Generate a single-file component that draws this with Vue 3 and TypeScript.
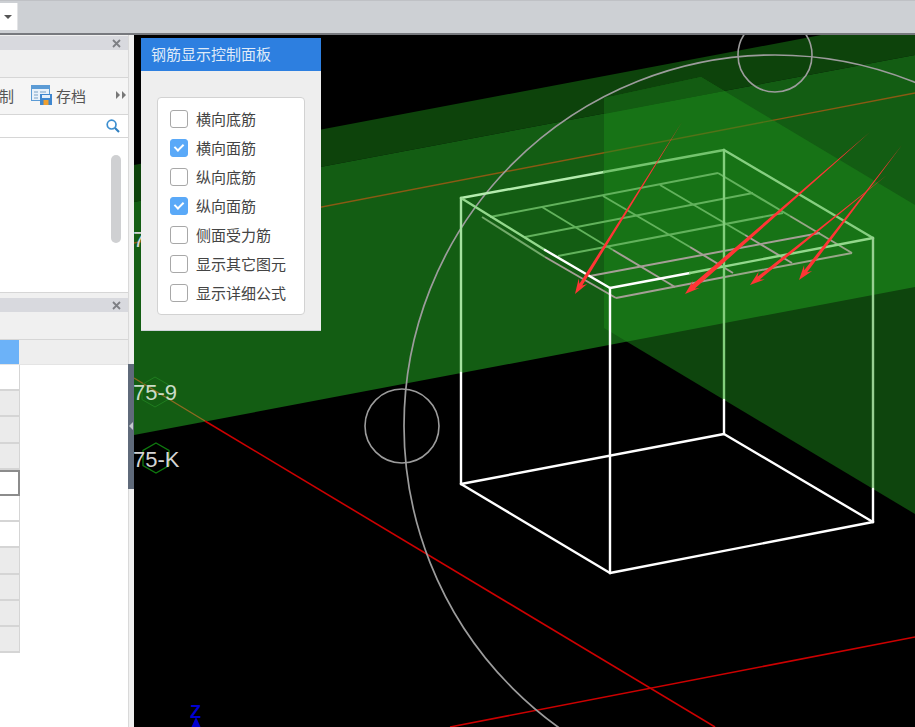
<script setup lang="ts">
import { ref } from 'vue'

type Pt = [number, number]

const options = ref([
  { label: '横向底筋', on: false },
  { label: '横向面筋', on: true },
  { label: '纵向底筋', on: false },
  { label: '纵向面筋', on: true },
  { label: '侧面受力筋', on: false },
  { label: '显示其它图元', on: false },
  { label: '显示详细公式', on: false },
])

// 表格行：white / grey / active
const rows = [
  'white', 'grey', 'grey', 'grey', 'active', 'white', 'white', 'grey', 'grey', 'grey', 'grey',
]

const PALE = '#93d88c'
const SOFT = '#74c46e'
const WHITE = '#ffffff'
const GRID = '#62b25c'
const GREY = '#a59f96'

// 立方体线框，被绿色平面遮住的部分颜色变淡
const boxEdges: { a: Pt; b: Pt; c: string }[] = [
  { a: [461, 198], b: [604, 172], c: '#b4ecae' },
  { a: [604, 172], b: [724, 150], c: SOFT },
  { a: [724, 150], b: [873, 238], c: '#86cf80' },
  { a: [461, 198], b: [545, 250], c: PALE },
  { a: [545, 250], b: [610, 288], c: WHITE },
  { a: [610, 288], b: [690, 273], c: WHITE },
  { a: [690, 273], b: [873, 238], c: PALE },
  { a: [461, 198], b: [461, 373], c: '#a6e2a0' },
  { a: [461, 373], b: [461, 484], c: WHITE },
  { a: [724, 150], b: [724, 400], c: '#83cf7d' },
  { a: [724, 400], b: [724, 434], c: WHITE },
  { a: [873, 238], b: [873, 489], c: '#98d092' },
  { a: [873, 489], b: [873, 522], c: WHITE },
  { a: [610, 288], b: [610, 573], c: WHITE },
  { a: [461, 484], b: [724, 434], c: WHITE },
  { a: [724, 434], b: [873, 522], c: WHITE },
  { a: [873, 522], b: [610, 573], c: WHITE },
  { a: [610, 573], b: [461, 484], c: WHITE },
]

const gridEdges: { a: Pt; b: Pt; c: string }[] = [
  { a: [490, 217], b: [718, 173], c: GRID },
  { a: [525, 237], b: [753, 193], c: GRID },
  { a: [558, 256], b: [783, 213], c: GRID },
  { a: [590, 276], b: [820, 233], c: GREY },
  { a: [616, 298], b: [730, 276], c: GREY },
  { a: [730, 276], b: [852, 253], c: '#98a688' },
  { a: [482, 217], b: [545, 257], c: '#72aa6a' },
  { a: [545, 257], b: [616, 298], c: GREY },
  { a: [542, 207], b: [613, 250], c: GRID },
  { a: [613, 250], b: [675, 287], c: GREY },
  { a: [603, 196], b: [690, 247], c: GRID },
  { a: [690, 247], b: [733, 273], c: GREY },
  { a: [660, 185], b: [745, 235], c: GRID },
  { a: [745, 235], b: [792, 263], c: GREY },
  { a: [718, 173], b: [790, 216], c: GRID },
  { a: [790, 216], b: [852, 253], c: '#98a688' },
]

function arrow(tail: Pt, tip: Pt, w: number): string {
  const dx = tip[0] - tail[0]
  const dy = tip[1] - tail[1]
  const len = Math.hypot(dx, dy)
  const ux = dx / len
  const uy = dy / len
  const at = (back: number, side: number) =>
    `${(tip[0] - ux * back - uy * side).toFixed(1)},${(tip[1] - uy * back + ux * side).toFixed(1)}`
  return [
    tail.join(','),
    at(11, w),
    at(15, 5),
    tip.join(','),
    at(15, -5),
    at(11, -w),
  ].join(' ')
}

const arrows = [
  arrow([682, 122], [575, 294], 1.7),
  arrow([870, 132], [685, 294], 2.4),
  arrow([887, 175], [750, 285], 1.8),
  arrow([902, 145], [799, 280], 1.8),
]

function hexagon(cx: number, cy: number, r: number): string {
  const pts: string[] = []
  for (let i = 0; i < 6; i++) {
    const t = (Math.PI / 3) * i - Math.PI / 2
    pts.push(`${(cx + r * Math.cos(t)).toFixed(1)},${(cy + r * Math.sin(t)).toFixed(1)}`)
  }
  return pts.join(' ')
}
</script>

<template>
  <div class="window">
    <header class="topbar">
      <div class="combo"><span class="caret"></span></div>
    </header>

    <div class="workspace">
      <aside class="side">
        <section class="panel first">
          <div class="panel-head">
            <svg class="close" width="9" height="9" viewBox="0 0 9 9">
              <path d="M1 1 8 8M8 1 1 8" />
            </svg>
          </div>
          <div class="strip"></div>
          <div class="tools">
            <span class="tool-cut">制</span>
            <svg class="save-icon" width="21" height="20" viewBox="0 0 21 20">
              <rect x="0.5" y="0.5" width="18" height="15" fill="#e8f1fa" stroke="#5b9bd5" />
              <rect x="0" y="0" width="19" height="4" fill="#5b9bd5" />
              <path d="M3 7h4M3 10h4M3 13h4M9 7h6" stroke="#9dbcd8" stroke-width="1.5" />
              <rect x="9" y="9" width="12" height="11" fill="#3f87cf" />
              <rect x="11" y="10" width="8" height="3" fill="#e6f0fa" />
              <rect x="12.5" y="15" width="5" height="5" fill="#f0a030" />
            </svg>
            <span class="tool-label">存档</span>
            <svg class="more" width="10" height="8" viewBox="0 0 10 8">
              <path d="M0 0 4 4 0 8ZM6 0 10 4 6 8Z" />
            </svg>
          </div>
          <div class="search">
            <svg width="14" height="14" viewBox="0 0 14 14">
              <circle cx="5.6" cy="5.6" r="4.4" fill="none" stroke="#3d8fd0" stroke-width="1.7" />
              <path d="M9 9 13 13" stroke="#2f7fc0" stroke-width="2.2" />
            </svg>
          </div>
          <div class="list"><div class="thumb"></div></div>
        </section>

        <section class="panel second">
          <div class="panel-head">
            <svg class="close" width="9" height="9" viewBox="0 0 9 9">
              <path d="M1 1 8 8M8 1 1 8" />
            </svg>
          </div>
          <div class="strip"></div>
          <div class="table-head"><div class="head-cell"></div></div>
          <div class="table-body">
            <div v-for="(row, i) in rows" :key="i" class="row" :class="row"></div>
          </div>
        </section>
      </aside>

      <div class="splitter">
        <div class="grip"><span class="grip-arrow"></span></div>
      </div>

      <main class="viewport">
        <svg class="scene" width="781" height="692" viewBox="134 35 781 692">
          <polygon points="134,165 821,35 915,35 915,55 134,202" fill="#0d430b" />
          <polygon points="134,202 915,55 915,287 134,435" fill="#135d13" />

          <line x1="134" y1="243" x2="915" y2="93" stroke="#8a5a14" stroke-width="1.4" />
          <line x1="134" y1="378" x2="205" y2="421" stroke="#8e6a22" stroke-width="1.4" />
          <line x1="205" y1="421" x2="715" y2="727" stroke="#cc0000" stroke-width="1.6" />
          <line x1="450" y1="727" x2="915" y2="637" stroke="#cc0000" stroke-width="1.6" />

          <g fill="none" stroke="#9c9c9c">
            <circle cx="775" cy="426" r="371" stroke-width="1.7" />
            <circle cx="775" cy="55" r="37" stroke-width="1.6" />
            <circle cx="402" cy="426" r="37" stroke-width="1.6" />
          </g>

          <polygon points="604,98 701,77 915,205 915,514 604,328" fill="rgba(28,137,26,0.5)" />
          <polygon points="604,98 701,77 724,91 604,114" fill="#135c12" />

          <line
            v-for="(e, i) in gridEdges"
            :key="'g' + i"
            :x1="e.a[0]" :y1="e.a[1]" :x2="e.b[0]" :y2="e.b[1]"
            :stroke="e.c"
            stroke-width="2"
          />
          <line
            v-for="(e, i) in boxEdges"
            :key="'b' + i"
            :x1="e.a[0]" :y1="e.a[1]" :x2="e.b[0]" :y2="e.b[1]"
            :stroke="e.c"
            stroke-width="2.4"
            stroke-linecap="round"
          />

          <polygon v-for="(p, i) in arrows" :key="'a' + i" :points="p" fill="#ff3535" />

          <polygon :points="hexagon(155, 392, 15)" fill="none" stroke="#1f7d1f" />
          <polygon :points="hexagon(156, 458, 15)" fill="none" stroke="#0f7a0f" stroke-width="1.3" />
          <text class="axis-label" x="133" y="247">7</text>
          <text class="axis-label soft" x="133" y="400">75-9</text>
          <text class="axis-label" x="133" y="467">75-K</text>

          <text class="z-label" x="190" y="718">Z</text>
          <polygon points="196,717 200.5,727 191.5,727" fill="#0000d0" />
        </svg>

        <div class="float-panel">
          <div class="float-title">钢筋显示控制面板</div>
          <div class="float-body">
            <div class="card">
              <label v-for="item in options" :key="item.label" class="option">
                <input v-model="item.on" class="native" type="checkbox" />
                <span class="box" :class="{ on: item.on }"></span>
                <span class="option-text">{{ item.label }}</span>
              </label>
            </div>
          </div>
        </div>
      </main>
    </div>
  </div>
</template>

<style>
html,
body {
  margin: 0;
  overflow: hidden;
}
</style>

<style scoped>
.window {
  display: flex;
  flex-direction: column;
  width: 915px;
  height: 727px;
  overflow: hidden;
  background: #f0f0f0;
  font-family: "Liberation Sans", "Noto Sans CJK SC", sans-serif;
  font-size: 15px;
  color: #444;
}

.topbar {
  flex: 0 0 35px;
  box-sizing: border-box;
  display: flex;
  align-items: flex-start;
  padding-top: 3px;
  background: #cdd0d4;
  border-top: 1px solid #bfc1c5;
  border-bottom: 2px solid #77797e;
}

.combo {
  display: flex;
  align-items: center;
  justify-content: flex-end;
  box-sizing: border-box;
  width: 18px;
  height: 27px;
  margin-top: -1px;
  padding-right: 5px;
  background: #fff;
  border-right: 1px solid #e3e4e6;
}

.caret {
  border-left: 4px solid transparent;
  border-right: 4px solid transparent;
  border-top: 4px solid #555;
}

.workspace {
  flex: 1;
  display: flex;
  min-height: 0;
}

.side {
  flex: 0 0 128px;
  display: flex;
  flex-direction: column;
  padding-top: 1px;
}

.panel.first {
  flex: 0 0 257px;
  display: flex;
  flex-direction: column;
  box-sizing: border-box;
  border-bottom: 1px solid #d6d6d6;
}

.panel.second {
  flex: 1;
  display: flex;
  flex-direction: column;
  margin-top: 5px;
  background: #fff;
}

.panel-head {
  flex: 0 0 14px;
  display: flex;
  align-items: center;
  justify-content: flex-end;
  padding-right: 7px;
  background: #d8d9de;
}

.close path {
  fill: none;
  stroke: #7d7f84;
  stroke-width: 1.8;
}

.strip {
  flex: 0 0 27px;
  background: #f0f0f0;
  border-bottom: 1px solid #d6d6d6;
}

.tools {
  flex: 0 0 37px;
  display: flex;
  align-items: center;
  box-sizing: border-box;
  padding-bottom: 3px;
  background: #f5f5f5;
  border-bottom: 1px solid #d6d6d6;
}

.tool-cut {
  width: 14px;
  overflow: hidden;
  direction: rtl;
  flex: 0 0 14px;
  margin-top: 2px;
  color: #555;
}

.save-icon {
  margin-left: 17px;
}

.tool-label {
  margin-left: 4px;
  margin-top: 2px;
  color: #555;
}

.more {
  margin-left: auto;
  margin-right: 2px;
}

.more path {
  fill: #777;
}

.search {
  flex: 0 0 23px;
  display: flex;
  align-items: center;
  justify-content: flex-end;
  box-sizing: border-box;
  padding-right: 8px;
  background: #fff;
  border-bottom: 1px solid #d6d6d6;
}

.list {
  flex: 1;
  display: flex;
  justify-content: flex-end;
  padding: 17px 7px 0 0;
  background: #fff;
}

.thumb {
  width: 10px;
  height: 88px;
  border-radius: 5px;
  background: #cfd0d2;
}

.table-head {
  flex: 0 0 24px;
  background: #eeeeee;
  border-bottom: 1px solid #e4e4e4;
}

.head-cell {
  width: 19px;
  height: 24px;
  background: #6cb2f8;
}

.table-body {
  width: 20px;
  display: flex;
  flex-direction: column;
}

.row {
  box-sizing: border-box;
  height: 26.2px;
  border-right: 1px solid #d5d5d5;
  border-bottom: 2px solid #d5d5d5;
}

.row.white {
  background: #fff;
}

.row.grey {
  background: #ebebeb;
}

.row.active {
  background: #fff;
  border: 2px solid #8c8c8c;
  border-left: 0;
}

.splitter {
  flex: 0 0 6px;
  display: flex;
  flex-direction: column;
  justify-content: flex-start;
  padding-top: 329px;
  background: #f0f0f0;
  box-shadow: inset 1px 0 #d9d9d9;
  box-sizing: border-box;
}

.grip {
  position: relative;
  height: 125px;
  background: #5f6a7a;
}

.grip-arrow {
  position: absolute;
  left: 1px;
  top: 58px;
  border-top: 4px solid transparent;
  border-bottom: 4px solid transparent;
  border-right: 4px solid #c4c8ce;
}

.viewport {
  position: relative;
  flex: 1;
  background: #000;
  overflow: hidden;
}

.scene {
  display: block;
}

.axis-label {
  font-family: "Liberation Sans", sans-serif;
  font-size: 22px;
  fill: #d4d4d4;
}

.axis-label.soft {
  fill: #c9dcc9;
}

.z-label {
  font-family: "Liberation Sans", sans-serif;
  font-size: 18px;
  font-weight: 700;
  fill: #0000d0;
}

.float-panel {
  position: absolute;
  left: 7px;
  top: 3px;
  width: 180px;
  box-sizing: border-box;
  background: #eeeeee;
  border-bottom: 1px solid #cfd3d8;
}

.float-title {
  height: 33px;
  padding-left: 10px;
  line-height: 33px;
  background: #2d7fe0;
  color: #dfeaf8;
}

.float-body {
  padding: 26px 16px 15px;
}

.card {
  display: flex;
  flex-direction: column;
  padding: 6px 12px 7px;
  background: #fff;
  border: 1px solid #d2d2d2;
  border-radius: 4px;
}

.option {
  position: relative;
  display: flex;
  align-items: center;
  height: 29px;
}

.native {
  position: absolute;
  width: 0;
  height: 0;
  margin: 0;
  opacity: 0;
}

.box {
  position: relative;
  flex: 0 0 18px;
  box-sizing: border-box;
  height: 18px;
  margin-right: 8px;
  background: #fff;
  border: 1.5px solid #a8a8a8;
  border-radius: 3px;
}

.box.on {
  background: #5aa9f8;
  border-color: #5aa9f8;
}

.box.on::after {
  content: "";
  position: absolute;
  left: 5px;
  top: 2px;
  width: 4px;
  height: 7px;
  border: solid #fff;
  border-width: 0 2.5px 2.5px 0;
  transform: rotate(45deg);
}

.option-text {
  white-space: nowrap;
  color: #444;
}
</style>
